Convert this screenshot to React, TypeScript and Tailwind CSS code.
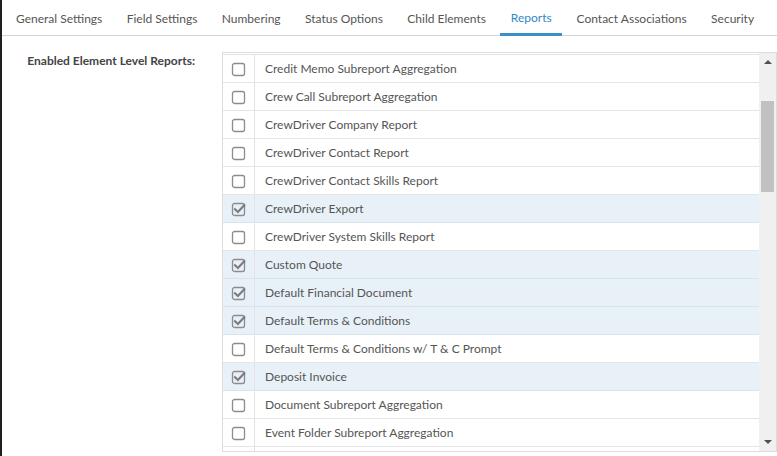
import React from "react";

const tabs = [
  "General Settings",
  "Field Settings",
  "Numbering",
  "Status Options",
  "Child Elements",
  "Reports",
  "Contact Associations",
  "Security",
];

const rows: [string, boolean][] = [
  ["Credit Memo Subreport Aggregation", false],
  ["Crew Call Subreport Aggregation", false],
  ["CrewDriver Company Report", false],
  ["CrewDriver Contact Report", false],
  ["CrewDriver Contact Skills Report", false],
  ["CrewDriver Export", true],
  ["CrewDriver System Skills Report", false],
  ["Custom Quote", true],
  ["Default Financial Document", true],
  ["Default Terms & Conditions", true],
  ["Default Terms & Conditions w/ T & C Prompt", false],
  ["Deposit Invoice", true],
  ["Document Subreport Aggregation", false],
  ["Event Folder Subreport Aggregation", false],
  ["", false],
];

function Box({ checked }: { checked: boolean }) {
  return (
    <svg width="16" height="16" viewBox="0 0 16 16" className="block">
      <rect x="1.5" y="2.5" width="12" height="12" rx="2" fill="none" stroke="#8c8c8c" strokeWidth="1.3" />
      {checked && (
        <path d="M4 8.2 L6.9 11 L13.2 4.2" fill="none" stroke="#7d7d7d" strokeWidth="2.2" strokeLinecap="square" />
      )}
    </svg>
  );
}

export default function App() {
  return (
    <div className="flex h-[456px] w-[777px] overflow-hidden bg-white font-['Lato','Open_Sans',sans-serif]">
      <div className="w-[2px] shrink-0 bg-[#1f1f1f]" />
      <div className="flex min-w-0 flex-1 flex-col">
        <div className="flex h-[36px] shrink-0 border-b border-[#d4d4d4] pl-[4px]">
          {tabs.map((t) => (
            <div
              key={t}
              className={
                t === "Reports"
                  ? "mr-[4.4px] flex h-[36px] items-center border-b-[3px] border-[#3b8fc6] px-[10.5px] pt-[2px] text-[12px] text-[#3389c2]"
                  : "mr-[4.4px] flex h-[35px] items-center px-[10px] pt-[2px] text-[12px] text-[#555555]"
              }
            >
              {t}
            </div>
          ))}
        </div>
        <div className="flex min-h-0 flex-1 pt-[16px]">
          <div className="w-[193px] shrink-0 pt-[1px] text-right text-[12px] font-bold leading-[16px] text-[#444444]">
            Enabled Element Level Reports:
          </div>
          <div className="ml-[27px] flex h-[400px] w-[555px] shrink-0 border border-[#dddddd]">
            <div className="min-w-0 flex-1 overflow-hidden">
              <div className="h-[2px] border-b border-[#e3e3e3]" />
              {rows.map(([label, checked], i) => (
                <div
                  key={i}
                  className={
                    checked
                      ? "flex h-[28px] border-b border-[#d8e3ea] bg-[#e8f1f7]"
                      : "flex h-[28px] border-b border-[#e5e5e5] bg-white"
                  }
                >
                  <div className="flex w-[32px] shrink-0 items-center justify-center border-r border-[#e3e3e3] pl-[1px]">
                    {label && <Box checked={checked} />}
                  </div>
                  <div className="flex items-center pl-[10px] text-[12px] text-[#555555]">{label}</div>
                </div>
              ))}
            </div>
            <div className="relative flex w-[17px] shrink-0 flex-col items-center bg-[#f0f0f0]">
              <div className="mt-[7px] h-0 w-0 border-x-[4px] border-b-[4px] border-x-transparent border-b-[#505050]" />
              <div className="mt-[37px] h-[91px] w-[13px] bg-[#c1c1c1]" />
              <div className="flex-1" />
              <div className="mb-[7px] h-0 w-0 border-x-[4px] border-t-[4px] border-x-transparent border-t-[#505050]" />
            </div>
          </div>
        </div>
      </div>
    </div>
  );
}
